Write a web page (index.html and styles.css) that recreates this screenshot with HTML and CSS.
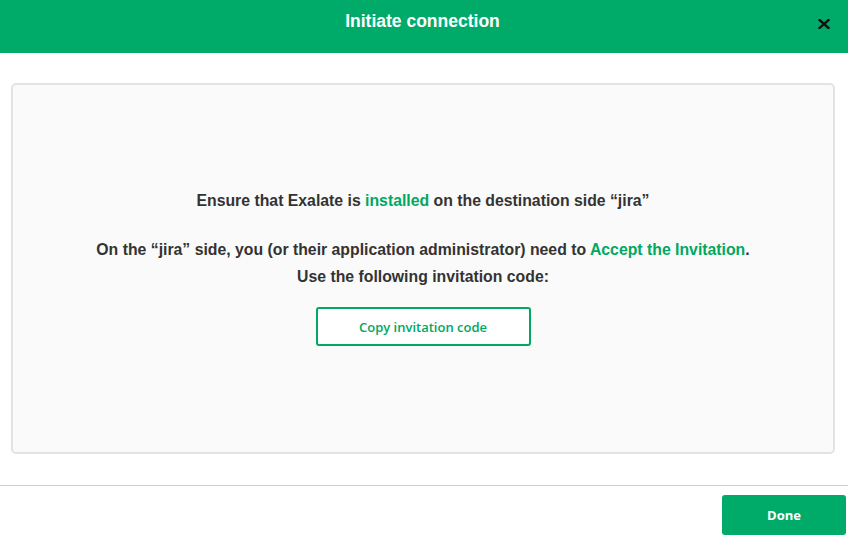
FILE: index.html
```html
<!DOCTYPE html>
<html lang="en">
<head>
<meta charset="utf-8">
<title>Initiate connection</title>
<link rel="stylesheet" href="styles.css">
</head>
<body>
<div class="modal">
  <header class="modal-header">
    <span class="spacer"></span>
    <h1 class="modal-title">Initiate connection</h1>
    <button class="close-btn" aria-label="Close">
      <svg width="12" height="10" viewBox="0 0 12 10"><path d="M1.5 1 L10.5 9 M10.5 1 L1.5 9" stroke="#111" stroke-width="2.4" stroke-linecap="square" fill="none"/></svg>
    </button>
  </header>
  <main class="modal-body">
    <section class="panel">
      <p class="line first">Ensure that Exalate is <a class="link">installed</a> on the destination side “jira”</p>
      <p class="line">On the “jira” side, you (or their application administrator) need to <a class="link">Accept the Invitation</a>.</p>
      <p class="line">Use the following invitation code:</p>
      <button class="copy-btn">Copy invitation code</button>
    </section>
  </main>
  <footer class="modal-footer">
    <button class="done-btn">Done</button>
  </footer>
</div>
</body>
</html>
```
FILE: styles.css
```css
html, body {
  margin: 0;
  padding: 0;
  background: #ffffff;
}
body {
  font-family: "Liberation Sans", Arial, sans-serif;
  width: 848px;
  height: 538px;
  overflow: hidden;
}
.modal {
  display: flex;
  flex-direction: column;
}
.modal-header {
  height: 53px;
  background: #00ab6a;
  display: grid;
  grid-template-columns: 1fr auto 1fr;
  align-items: start;
}
.modal-title {
  margin: 0;
  padding-top: 10px;
  font-size: 17.5px;
  line-height: 22px;
  font-weight: bold;
  color: #ffffff;
  padding-right: 3px;
}
.close-btn {
  justify-self: end;
  background: none;
  border: 0;
  padding: 0;
  margin: 19px 18px 0 0;
  width: 12px;
  height: 10px;
  display: flex;
  cursor: pointer;
}
.modal-body {
  padding: 30px 13px 31px 11px;
}
.panel {
  box-sizing: border-box;
  height: 371px;
  border: 2px solid #e3e3e3;
  border-radius: 5px;
  background: #fafafa;
  display: flex;
  flex-direction: column;
  align-items: center;
  justify-content: center;
  padding-bottom: 4px;
}
.line {
  margin: 0;
  font-size: 15.8px;
  line-height: 27px;
  font-weight: bold;
  color: #333333;
  text-align: center;
}
.line.first {
  margin-bottom: 22px;
}
.link {
  color: #00a862;
  text-decoration: none;
}
.copy-btn {
  margin-top: 17px;
  width: 215px;
  height: 39px;
  box-sizing: border-box;
  border: 2px solid #00a862;
  border-radius: 3px;
  background: #ffffff;
  color: #00a862;
  font-family: "Open Sans", sans-serif;
  font-weight: 600;
  font-size: 13px;
  cursor: pointer;
}
.modal-footer {
  border-top: 1px solid #cfcfcf;
  padding: 9px 2px 3px 0;
  display: flex;
  justify-content: flex-end;
}
.done-btn {
  width: 124px;
  height: 40px;
  border: 0;
  border-radius: 3px;
  background: #00ab6a;
  color: #ffffff;
  font-family: "Open Sans", sans-serif;
  font-weight: 700;
  font-size: 13px;
  cursor: pointer;
}
```
